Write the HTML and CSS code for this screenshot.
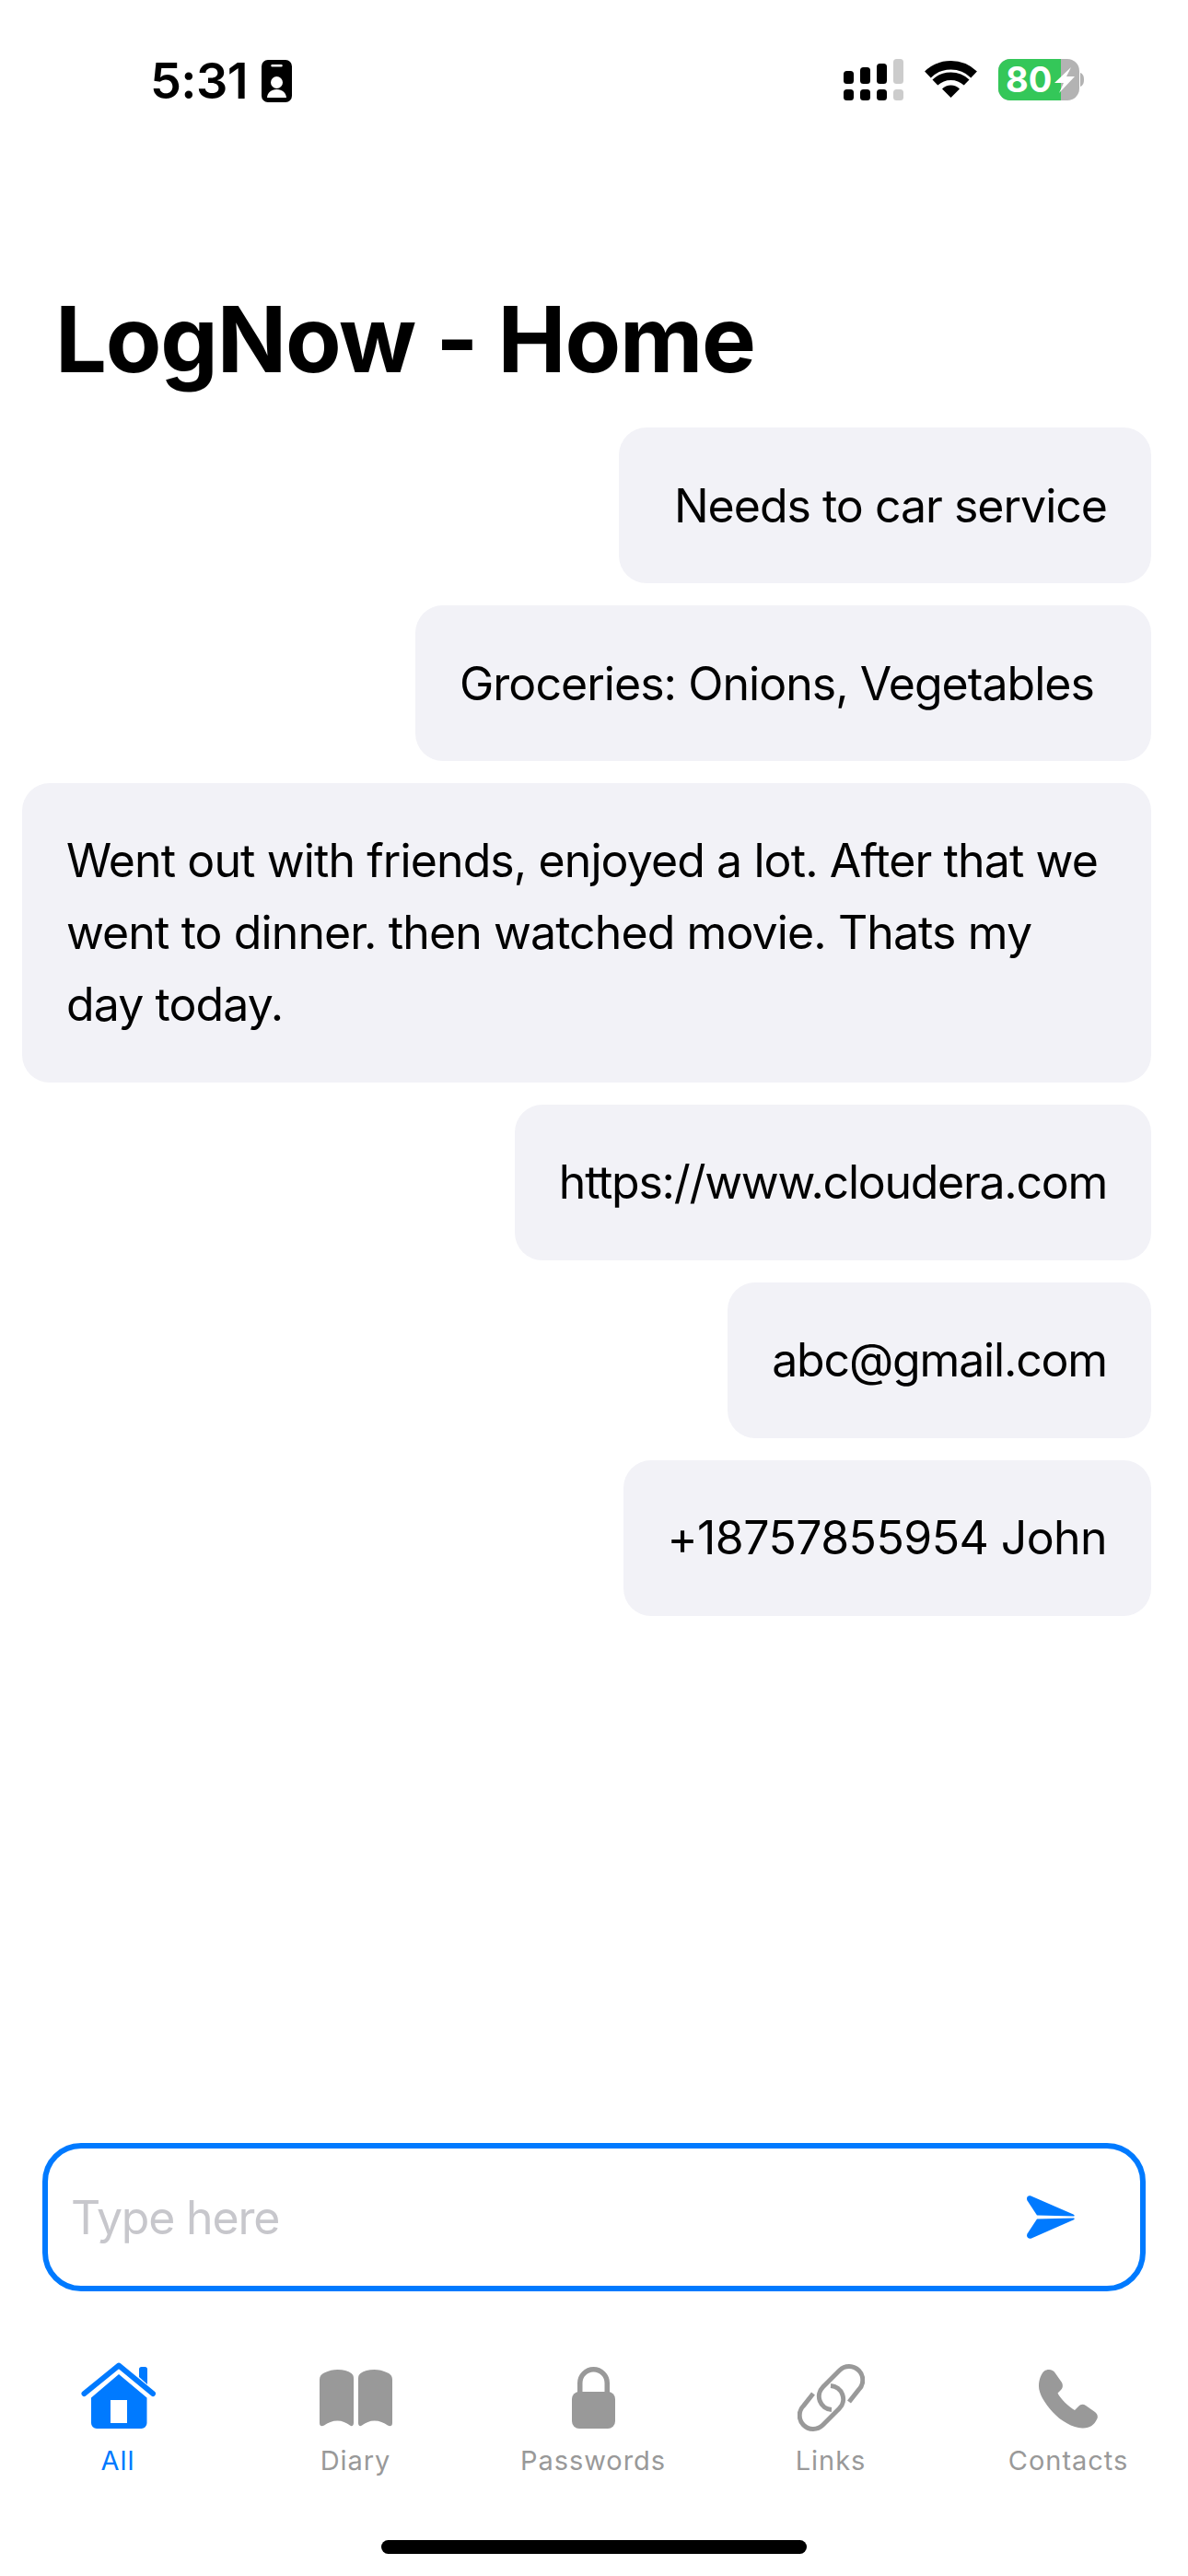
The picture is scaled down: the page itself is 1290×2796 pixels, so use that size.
FILE: index.html
```html
<!DOCTYPE html>
<html lang="en">
<head>
<meta charset="utf-8">
<title>LogNow - Home</title>
<link rel="stylesheet" href="styles.css">
</head>
<body>
<div class="app">
  <header class="status">
    <div class="status-left">
      <span class="time">5:31</span>
      <svg class="badge" viewBox="0 0 33 46"><path fill="#000" fill-rule="evenodd" d="M7 0H26A7 7 0 0 1 33 7V39A7 7 0 0 1 26 46H7A7 7 0 0 1 0 39V7A7 7 0 0 1 7 0ZM11.500 5A1.250 1.250 0 0 0 11.500 7.500H21.500A1.250 1.250 0 0 0 21.500 5ZM16.500 18A6.500 6.500 0 1 0 16.500 31A6.500 6.500 0 1 0 16.500 18ZM16.500 32C10.500 32 6.500 35.500 6 41H27C26.500 35.500 22.500 32 16.500 32Z"/></svg>
    </div>
    <div class="status-right">
      <svg class="signal" viewBox="0 0 65 45">
        <rect x="0" y="13" width="11" height="14" rx="3.500"/><rect x="18" y="9" width="11" height="18" rx="3.500"/><rect x="36" y="5" width="11" height="22" rx="3.500"/><rect x="54" y="0" width="11" height="27" rx="3.500" fill="#ccc"/>
        <rect x="0" y="33" width="11" height="12" rx="3.500"/><rect x="18" y="33" width="11" height="12" rx="3.500"/><rect x="36" y="33" width="11" height="12" rx="3.500"/><rect x="54" y="33" width="11" height="12" rx="3.500" fill="#ccc"/>
      </svg>
      <svg class="wifi" viewBox="0 0 57 41">
        <path fill="none" stroke="#000" stroke-width="9.500" d="M3.400 16A36 36 0 0 1 53.600 16"/>
        <path fill="none" stroke="#000" stroke-width="8.500" d="M11.400 24.500A24.800 24.800 0 0 1 45.600 24.500"/>
        <path d="M19 31.500A13.400 13.400 0 0 1 38 31.500L28.500 41Z"/>
      </svg>
      <svg class="battery" viewBox="0 0 93 45">
        <rect x="0" y="0" width="88" height="45" rx="13" fill="#b3b3b3"/>
        <path fill="#34c759" d="M13 0H68V45H13A13 13 0 0 1 0 32V13A13 13 0 0 1 13 0Z"/>
        <path fill="#b3b3b3" d="M89 15C92 16 93 19 93 22.500C93 26 92 29 89 30Z"/>
        <text class="battery-text" x="8" y="36">80</text>
        <path fill="#fff" d="M79 9L61 26H71L66 37L83 19H74Z"/>
      </svg>
    </div>
  </header>

  <h1 class="title">LogNow - Home</h1>

  <main class="list">
    <div class="bubble bubble-wide-left">Needs to car service</div>
    <div class="bubble bubble-wide-right">Groceries: Onions, Vegetables</div>
    <div class="bubble">Went out with friends, enjoyed a lot. After that we went to dinner. then watched movie. Thats my day today.</div>
    <div class="bubble bubble-url">https://www.cloudera.com</div>
    <div class="bubble bubble-email">abc@gmail.com</div>
    <div class="bubble bubble-phone">+18757855954 John</div>
  </main>

  <form class="composer">
    <span class="placeholder">Type here</span>
    <svg class="send" viewBox="0 0 52 47"><path fill="#007aff" d="M0.500 5.500C-1 2 1 -0.500 4.500 0.500L50.500 20.500C52 21.300 52 22.300 51 22.500L11 21.500Z"/><path fill="#007aff" d="M11 25.500L51 24.500C52 24.700 52 25.700 50.500 26.500L5 46.500C1.500 47.500 -1 45 0.500 41.500Z"/></svg>
  </form>

  <nav class="tabs">
    <div class="tab active">
      <svg class="tab-icon home" viewBox="0 0 81 72">
        <path fill="#007aff" d="M63 7.500C63 6 64 5 65.500 5H69.500C71 5 72 6 72 7.500V24L63 16Z"/>
        <path fill="none" stroke="#007aff" stroke-width="6" stroke-linecap="round" stroke-linejoin="round" d="M3.500 34L41 3.500L78 34"/>
        <path fill="#007aff" fill-rule="evenodd" d="M41 13L71.500 38.500V66A6 6 0 0 1 65.500 72H17A6 6 0 0 1 11 66V38.500ZM32 41V66H50V41Z"/>
      </svg>
      <span class="tab-label">All</span>
    </div>
    <div class="tab">
      <svg class="tab-icon book" viewBox="0 0 79 62">
        <path fill="#999" d="M0 11C0 7 2 5 5 3.500C10 1 15 0 19.500 0C26 0 31 1.500 34.500 4C36.500 5.500 37 7 37 10V58C37 61 35 62 33 60.500C29 57.500 24.500 55.500 19.500 55.500C14 55.500 9 57.500 5 60.500C2.500 62 0 61.500 0 58Z"/>
        <path fill="#999" d="M79 11C79 7 77 5 74 3.500C69 1 64 0 59.500 0C53 0 48 1.500 44.500 4C42.500 5.500 42 7 42 10V58C42 61 44 62 46 60.500C50 57.500 54.500 55.500 59.500 55.500C65 55.500 70 57.500 74 60.500C76.500 62 79 61.500 79 58Z"/>
      </svg>
      <span class="tab-label">Diary</span>
    </div>
    <div class="tab">
      <svg class="tab-icon lock" viewBox="0 0 47 67">
        <path fill="none" stroke="#999" stroke-width="5.500" d="M8.750 30V17.500A14.750 14.750 0 0 1 38.250 17.500V30"/>
        <rect x="0" y="27" width="47" height="40" rx="8" fill="#999"/>
      </svg>
      <span class="tab-label">Passwords</span>
    </div>
    <div class="tab">
      <svg class="tab-icon link" viewBox="0 0 73 73">
        <path fill="none" stroke="#999" stroke-width="5" d="M56 41L66.300 28A14.500 14.500 0 0 0 45.700 6.700L27.700 24.700A14.500 14.500 0 0 0 37 49.500"/>
        <path fill="none" stroke="#999" stroke-width="5" d="M17 32L6.700 45A14.500 14.500 0 0 0 27.300 66.300L45.300 48.300A14.500 14.500 0 0 0 36 23.500"/>
      </svg>
      <span class="tab-label">Links</span>
    </div>
    <div class="tab">
      <svg class="tab-icon phone" viewBox="0 0 64 64">
        <path fill="#999" d="M11 0C14 0 16 1 18 4L25 14C26.500 17 26 20 24 22L20.500 25.500C23 31 33 41 39 44L43 40C45.500 37.500 48 37 51 39L61 46C64 48.500 64.500 51.500 63 54C60 60 55 64 47 63.500C37 63 24 56 15 46C6 36 0 26 0 18C0 10 3 4 6 1.500C7.500 0.500 9 0 11 0Z"/>
      </svg>
      <span class="tab-label">Contacts</span>
    </div>
  </nav>
  <div class="home-bar"></div>
</div>
</body>
</html>
```

FILE: styles.css
```css
* { box-sizing: border-box; }
html, body { margin: 0; padding: 0; background: #fff; }
body { font-family: "Inter", "Liberation Sans", sans-serif; color: #000; }
.app { width: 1290px; height: 2796px; padding-bottom: 24px; display: flex; flex-direction: column; overflow: hidden; }

.status { height: 130px; flex: none; display: flex; justify-content: space-between; align-items: flex-start; padding: 65px 113px 0 163px; }
.status-left { display: flex; align-items: flex-start; gap: 15px; }
.time { font-size: 54px; font-weight: 600; line-height: 46px; letter-spacing: -0.6px; }
.badge { width: 33px; height: 46px; display: block; }
.status-right { display: flex; align-items: flex-start; margin-top: -1px; }
.signal { width: 65px; height: 45px; display: block; margin-right: 23px; }
.wifi { width: 57px; height: 41px; display: block; margin-top: 1px; margin-right: 23px; }
.battery { width: 93px; height: 45px; display: block; }
.battery-text { font-family: "Inter", sans-serif; font-size: 38px; font-weight: 700; fill: #fff; }

.title { margin: 214px 0 0; padding: 0 0 0 60px; flex: none; font-size: 99px; line-height: 48px; font-weight: 700; letter-spacing: -1.2px; height: 48px; }

.list { flex: none; display: flex; flex-direction: column; align-items: flex-end; gap: 24px; margin-top: 72px; padding: 0 40px 0 24px; }
.bubble { background: #f2f2f7; border-radius: 30px; padding: 45px 48px 46px; font-size: 50px; line-height: 78px; letter-spacing: -0.9px; max-width: 1226px; }
.bubble-wide-left { padding: 46px 48px 45px 60px; letter-spacing: -1px; }
.bubble-wide-right { padding: 46px 62px 45px 48px; letter-spacing: -0.96px; }
.bubble-url { letter-spacing: -1.27px; }
.bubble-email { letter-spacing: -1.17px; }
.bubble-phone { letter-spacing: -0.58px; }

.composer { margin: auto 46px 0; flex: none; height: 161px; border: 6px solid #007aff; border-radius: 42px; display: flex; align-items: center; justify-content: space-between; padding: 0 71px 0 25px; }
.placeholder { font-size: 50px; letter-spacing: -1.2px; color: #c7c7cc; }
.send { width: 52px; height: 47px; display: block; }

.tabs { flex: none; display: grid; grid-template-columns: repeat(5, 258px); margin: 73px 0 0 -1px; height: 134px; }
.tab { display: flex; flex-direction: column; align-items: center; height: 134px; }
.tab-icon { display: block; margin-top: auto; margin-bottom: 12px; }
.home { width: 81px; height: 72px; }
.book { width: 79px; height: 62px; margin-bottom: 14px; }
.lock { width: 47px; height: 67px; }
.link { width: 73px; height: 73px; margin-bottom: 9px; }
.phone { width: 64px; height: 64px; }
.tab-label { flex: none; height: 46px; font-size: 29px; line-height: 46px; letter-spacing: 0.95px; color: #999; }
.tab.active .tab-label { color: #007aff; }

.home-bar { flex: none; width: 462px; height: 15px; border-radius: 8px; background: #000; margin: 63px auto 0; }
```
